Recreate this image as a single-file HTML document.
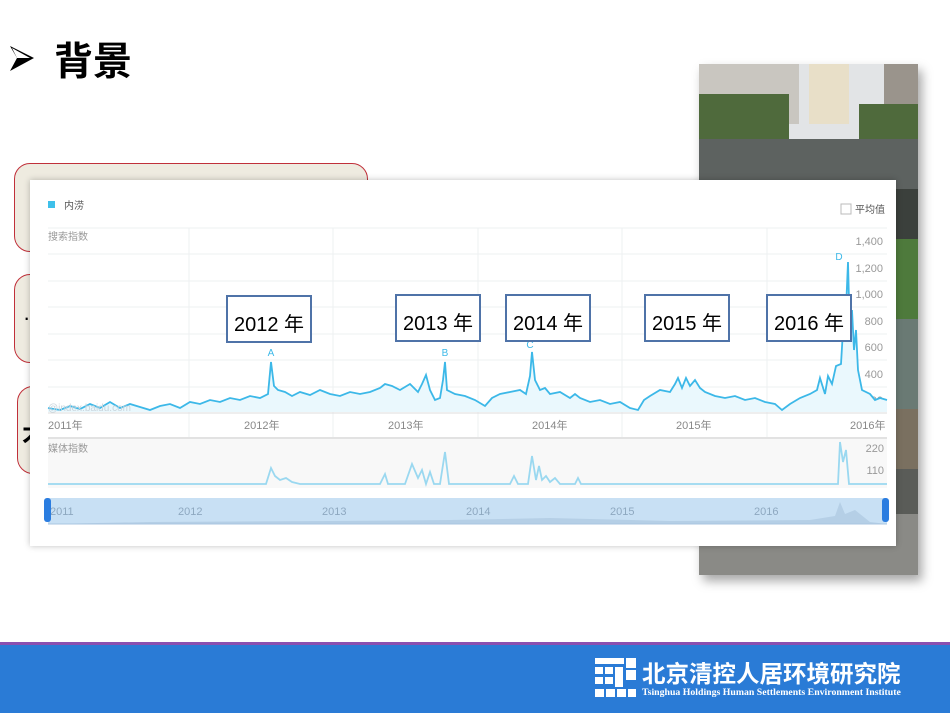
<!DOCTYPE html>
<html><head><meta charset="utf-8">
<style>
html,body{margin:0;padding:0;}
body{width:950px;height:713px;position:relative;overflow:hidden;background:#fff;font-family:"Liberation Sans","Noto Sans CJK SC",sans-serif;}
.abs{position:absolute;}
.rbox{position:absolute;background:#eeebe0;border:1.5px solid #c0303a;border-radius:16px;box-sizing:border-box;}
.yr{position:absolute;border:2px solid #4f73a8;background:#fff;box-sizing:border-box;font-family:"Liberation Sans","Noto Sans CJK SC",sans-serif;font-size:20px;color:#000;text-align:center;line-height:56px;}
</style></head><body>

<svg class="abs" style="left:8px;top:44px" width="28" height="28" viewBox="0 0 28 28"><path d="M2 2 L26 14 L2 27 L9 14 Z" fill="#000"/><path d="M4 4 L22 14 L9 14 Z" fill="#fff"/></svg>
<div class="abs" style="left:54px;top:34px;font-size:39px;font-weight:bold;font-family:'Noto Sans CJK SC',sans-serif;line-height:50px">背景</div>

<div class="rbox" style="left:14px;top:163px;width:354px;height:89px"></div>
<div class="rbox" style="left:14px;top:274px;width:354px;height:89px"><span style="position:absolute;left:8px;top:30px;font-size:22px">·</span></div>
<div class="rbox" style="left:17px;top:386px;width:354px;height:88px"><span style="position:absolute;left:4px;top:28px;font-size:24px;font-weight:bold">才</span></div>

<!-- photo -->
<div class="abs" style="left:699px;top:64px;width:219px;height:511px;box-shadow:4px 6px 10px rgba(0,0,0,0.35);overflow:hidden;background:#6b6f70">
<svg width="219" height="511">
<rect x="0" y="0" width="219" height="75" fill="#e2e4e6"/>
<rect x="0" y="0" width="100" height="60" fill="#c9c6c0"/>
<rect x="110" y="0" width="40" height="60" fill="#e8dfc8"/>
<rect x="185" y="0" width="34" height="80" fill="#9a948c"/>
<rect x="0" y="30" width="90" height="45" fill="#4f6a3c"/>
<rect x="160" y="40" width="59" height="40" fill="#4f6a3c"/>
<rect x="0" y="75" width="219" height="50" fill="#5d6260"/>
<rect x="0" y="125" width="219" height="50" fill="#3b403c"/>
<rect x="190" y="175" width="29" height="80" fill="#4e7a3c"/>
<rect x="190" y="255" width="29" height="90" fill="#6a7a74"/>
<rect x="0" y="345" width="219" height="166" fill="#5a5c58"/>
<rect x="0" y="450" width="219" height="61" fill="#8a8a86"/>
<rect x="190" y="345" width="29" height="60" fill="#7a7060"/>
</svg></div>

<!-- chart screenshot -->
<div class="abs" style="left:30px;top:180px;width:866px;height:366px;background:#fff;box-shadow:0 0 6px rgba(0,0,0,0.25)">
<svg width="866" height="366" style="font-family:'Liberation Sans','Noto Sans CJK SC',sans-serif">
<rect x="18" y="21" width="7" height="7" fill="#3ec0ea"/>
<text x="34" y="29" font-size="10" fill="#555">内涝</text>
<rect x="811" y="24" width="10" height="10" fill="#fff" stroke="#bbb"/>
<text x="825" y="33" font-size="10" fill="#555">平均值</text>
<text x="18" y="60" font-size="10" fill="#999">搜索指数</text>
<g stroke="#eef0f2" stroke-width="1">
<line x1="18" y1="48" x2="857" y2="48"/><line x1="18" y1="74" x2="857" y2="74"/><line x1="18" y1="101" x2="857" y2="101"/><line x1="18" y1="127" x2="857" y2="127"/><line x1="18" y1="154" x2="857" y2="154"/><line x1="18" y1="180" x2="857" y2="180"/><line x1="18" y1="207" x2="857" y2="207"/>
<line x1="159" y1="48" x2="159" y2="258"/><line x1="303" y1="48" x2="303" y2="258"/><line x1="448" y1="48" x2="448" y2="258"/><line x1="592" y1="48" x2="592" y2="258"/><line x1="737" y1="48" x2="737" y2="258"/>
</g>
<g font-size="11" fill="#999" text-anchor="end">
<text x="853" y="65">1,400</text><text x="853" y="92">1,200</text><text x="853" y="118">1,000</text><text x="853" y="145">800</text><text x="853" y="171">600</text><text x="853" y="198">400</text><text x="853" y="224">200</text>
</g>
<polyline fill="#eaf8fd" stroke="none" points="18,232 18,228 30,230 40,226 50,229 60,224 70,228 80,222 90,228 100,224 110,227 120,230 130,226 140,224 150,228 160,222 170,224 180,220 190,222 200,218 210,220 220,216 230,218 238,214 241,182 244,206 248,210 255,212 262,216 270,212 280,215 290,210 300,214 310,216 320,212 330,214 340,212 350,208 355,204 362,206 370,210 380,204 388,212 392,204 396,195 400,210 405,220 410,218 413,200 415,182 417,210 425,214 435,216 445,220 455,226 462,218 470,214 480,212 490,210 496,214 500,196 502,172 505,200 510,210 515,208 520,214 530,212 540,218 545,214 550,218 560,222 570,220 580,224 590,222 600,228 608,230 614,220 620,216 630,210 640,212 645,204 648,198 652,208 656,198 660,206 665,200 670,208 675,212 685,216 695,218 705,216 715,220 725,218 735,222 745,224 752,230 760,224 770,218 780,214 787,210 790,198 795,214 798,196 802,204 806,186 811,184 813,150 816,130 818,82 820,160 822,130 824,170 826,150 828,190 832,210 840,214 845,220 850,218 857,220 857,232"/>
<polyline fill="none" stroke="#3cb8e8" stroke-width="1.8" points="18,228 30,230 40,226 50,229 60,224 70,228 80,222 90,228 100,224 110,227 120,230 130,226 140,224 150,228 160,222 170,224 180,220 190,222 200,218 210,220 220,216 230,218 238,214 241,182 244,206 248,210 255,212 262,216 270,212 280,215 290,210 300,214 310,216 320,212 330,214 340,212 350,208 355,204 362,206 370,210 380,204 388,212 392,204 396,195 400,210 405,220 410,218 413,200 415,182 417,210 425,214 435,216 445,220 455,226 462,218 470,214 480,212 490,210 496,214 500,196 502,172 505,200 510,210 515,208 520,214 530,212 540,218 545,214 550,218 560,222 570,220 580,224 590,222 600,228 608,230 614,220 620,216 630,210 640,212 645,204 648,198 652,208 656,198 660,206 665,200 670,208 675,212 685,216 695,218 705,216 715,220 725,218 735,222 745,224 752,230 760,224 770,218 780,214 787,210 790,198 795,214 798,196 802,204 806,186 811,184 813,150 816,130 818,82 820,160 822,130 824,170 826,150 828,190 832,210 840,214 845,220 850,218 857,220"/>
<g font-size="10" fill="#3cb8e8" text-anchor="middle"><text x="241" y="176">A</text><text x="415" y="176">B</text><text x="500" y="168">C</text><text x="809" y="80">D</text></g>
<text x="18" y="231" font-size="10" fill="#c8d4dc">@index.baidu.com</text>
<line x1="18" y1="233" x2="857" y2="233" stroke="#ddd"/>
<g font-size="11" fill="#888"><text x="18" y="249">2011年</text><text x="214" y="249">2012年</text><text x="358" y="249">2013年</text><text x="502" y="249">2014年</text><text x="646" y="249">2015年</text><text x="820" y="249">2016年</text></g>
<rect x="18" y="258" width="839" height="50" fill="#f8f8f8"/>
<line x1="18" y1="258" x2="857" y2="258" stroke="#e2e2e2" stroke-width="2"/>
<text x="18" y="272" font-size="10" fill="#999">媒体指数</text>
<text x="854" y="272" font-size="11" fill="#999" text-anchor="end">220</text>
<text x="854" y="294" font-size="11" fill="#999" text-anchor="end">110</text>
<polyline fill="none" stroke="#9ad8f0" stroke-width="1.8" points="18,304 236,304 241,288 245,296 250,300 256,298 262,302 270,304 350,304 355,294 358,304 375,304 382,284 388,298 392,290 396,304 400,292 404,304 410,304 415,272 419,304 480,304 484,296 488,304 498,304 502,276 506,300 509,286 512,300 516,296 520,302 525,298 530,304 545,304 548,298 551,304 808,304 810,262 813,282 816,270 819,304 857,304"/>
<rect x="18" y="318" width="839" height="26" fill="#c8e0f4"/>
<path d="M18 344 L120 342 L300 341 L420 340 L520 338 L640 341 L780 340 L805 336 L810 322 L815 334 L825 330 L840 342 L857 344 Z" fill="#b5cfe6"/>
<g font-size="11" fill="#8ea8c0"><text x="20" y="335">2011</text><text x="148" y="335">2012</text><text x="292" y="335">2013</text><text x="436" y="335">2014</text><text x="580" y="335">2015</text><text x="724" y="335">2016</text></g>
<line x1="18" y1="344" x2="857" y2="344" stroke="#a9c6e0"/>
<rect x="14" y="318" width="7" height="24" rx="3" fill="#2b7de0"/>
<rect x="852" y="318" width="7" height="24" rx="3" fill="#2b7de0"/>
</svg></div>

<div class="yr" style="left:226px;top:295px;width:86px;height:48px;line-height:56px">2012 年</div>
<div class="yr" style="left:395px;top:294px;width:86px;height:48px">2013 年</div>
<div class="yr" style="left:505px;top:294px;width:86px;height:48px">2014 年</div>
<div class="yr" style="left:644px;top:294px;width:86px;height:48px">2015 年</div>
<div class="yr" style="left:766px;top:294px;width:86px;height:48px">2016 年</div>

<!-- footer -->
<div class="abs" style="left:0;top:642px;width:950px;height:3px;background:#8a4fb0"></div>
<div class="abs" style="left:0;top:645px;width:950px;height:68px;background:#2a7bd6"></div>
<svg class="abs" style="left:595px;top:658px" width="42" height="40">
<g fill="#fff">
<rect x="0" y="0" width="29" height="6"/><rect x="31" y="0" width="10" height="10"/>
<rect x="0" y="9" width="8" height="7"/><rect x="10" y="9" width="8" height="7"/><rect x="20" y="9" width="8" height="20"/>
<rect x="31" y="12" width="10" height="10"/>
<rect x="0" y="19" width="8" height="7"/><rect x="10" y="19" width="8" height="7"/>
<rect x="0" y="31" width="9" height="8"/><rect x="11" y="31" width="9" height="8"/><rect x="22" y="31" width="9" height="8"/><rect x="33" y="31" width="8" height="8"/>
</g></svg>
<div class="abs" style="left:642px;top:656px;font-size:23.5px;font-weight:bold;color:#fff;font-family:'Noto Sans CJK SC',sans-serif;line-height:32px">北京清控人居环境研究院</div>
<div class="abs" style="left:642px;top:687px;font-size:9.8px;font-weight:bold;color:#fff;font-family:'Liberation Serif',serif;white-space:nowrap">Tsinghua Holdings Human Settlements Environment Institute</div>
</body></html>
